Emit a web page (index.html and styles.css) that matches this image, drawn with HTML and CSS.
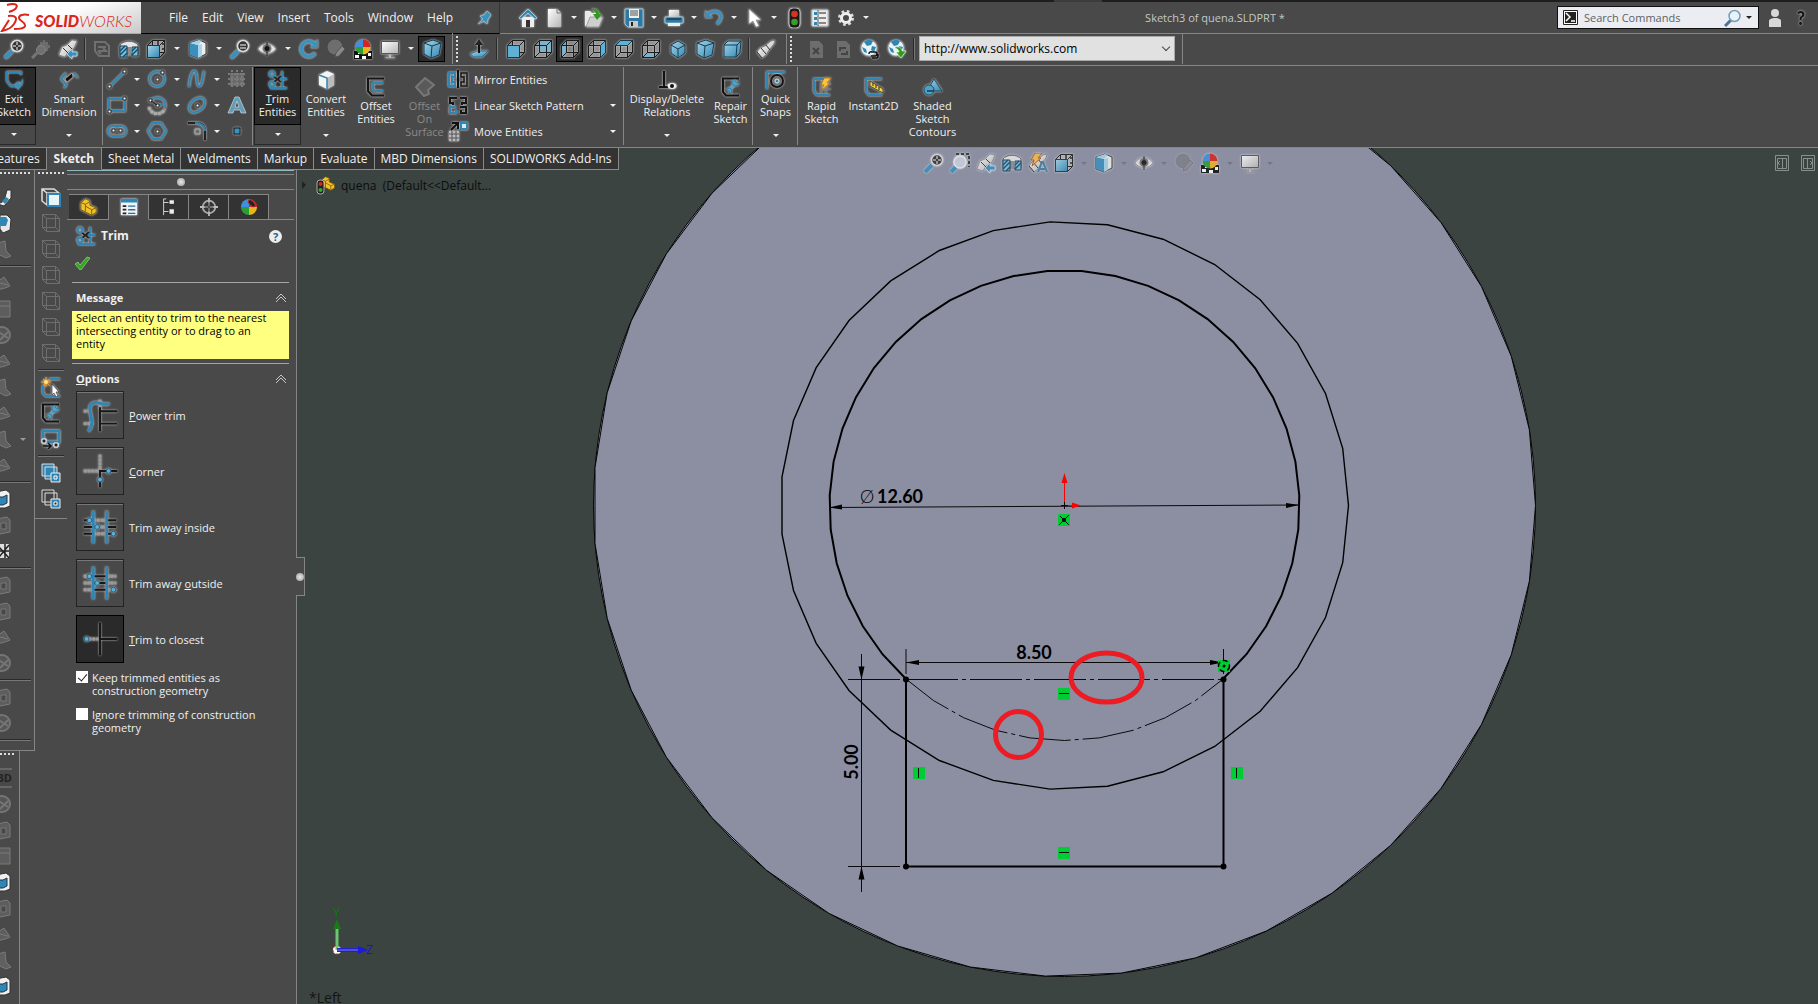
FILE: index.html
```html
<!DOCTYPE html>
<html lang="en">
<head>
<meta charset="utf-8">
<title>Sketch3 of quena.SLDPRT *</title>
<link rel="stylesheet" href="styles.css">
</head>
<body>
<svg class="defs" aria-hidden="true">
  <defs>
    <linearGradient id="gb" x1="0" y1="0" x2="1" y2="1"><stop offset="0" stop-color="#a5d5ea"/><stop offset="1" stop-color="#3388b3"/></linearGradient>
    <linearGradient id="gw" x1="0" y1="0" x2="1" y2="1"><stop offset="0" stop-color="#fff"/><stop offset="1" stop-color="#b5b5b5"/></linearGradient>
    <symbol id="wire" viewBox="0 0 20 20"><path class="k" d="M1.500 6.500h12v12h-12zM6.500 1.500h12v12h-12zM1.500 6.500l5-5M13.500 6.500l5-5M13.500 18.500l5-5M1.500 18.500l5-5"/></symbol>
    <symbol id="fit" viewBox="0 0 20 20"><path d="M1 19l7-7" stroke="#3b8fbc" stroke-width="4"/><circle cx="13" cy="7" r="5.500" fill="#333" stroke="#ddd" stroke-width="1.500"/><path d="M13 3v8M9 7h8" stroke="#fff" stroke-dasharray="3 2"/></symbol>
    <symbol id="area" viewBox="0 0 20 20"><path d="M6 1h13v13" fill="none" stroke="#333" stroke-width="2" stroke-dasharray="3 2"/><path d="M1 19l5-5" stroke="#3b8fbc" stroke-width="4"/><circle cx="10" cy="9" r="6" fill="#c9d3dd" stroke="#eee" stroke-width="1.500"/></symbol>
    <symbol id="areaoff" viewBox="0 0 20 20"><path d="M7 1h12v12H7z" fill="#6c6c6c"/><path d="M8 6V2h4M14 2h4v4M18 9v4h-4" fill="none" stroke="#444" stroke-width="1.500"/><path d="M1 19l5-5" stroke="#777" stroke-width="3"/><circle cx="10" cy="11" r="4.500" fill="#707070" stroke="#858585"/></symbol>
    <symbol id="prev" viewBox="0 0 20 20"><path d="M1 16l3-8 5-2 5-5 5 1-3 7-6 4-3 5z" fill="url(#gw)" stroke="#666" stroke-width=".6"/><path d="M5 9l5 5M10 6l4 4" stroke="#333"/><path d="M9 15l5-5v3h5v4h-5v3z" fill="#3b8fbc" stroke="#d9eef8" stroke-width=".6"/></symbol>
    <symbol id="spy" viewBox="0 0 20 20"><path d="M1 13l3-4 5-2 6-5 4-1-1 4-5 6-3 5-4 3z" fill="url(#gw)" stroke="#555" stroke-width=".6"/><path d="M1 13l5 6M5 9l5 6M10 6l4 5" stroke="#333"/></symbol>
    <symbol id="loop" viewBox="0 0 20 20"><path d="M3 12V3h10l4 4v10H7zM6 8h8M6 12h8l-3-3M9 15l-3-3" fill="none" stroke="#707070" stroke-width="2"/></symbol>
    <symbol id="section" viewBox="0 0 20 20"><path d="M1 6c4-5 14-5 18 0v9H1z" fill="#e6e6e6" stroke="#333" stroke-width=".7"/><path d="M8 8h4v8H8z" fill="#8d8d8d"/><path d="M1 7h7v11H1zM13 8h6v9h-6z" fill="#7fc0de" stroke="#17394c"/><path d="M1 12l5-5M1 16l7-7M4 18l4-4M13 12l4-4M13 16l6-6" stroke="#12506f" stroke-width="1.500"/></symbol>
    <symbol id="orient" viewBox="0 0 20 20"><use href="#wire"/><path d="M1.500 6.500h12v12h-12z" fill="url(#gb)" stroke="#17394c"/><path d="M12 1v5M16 5h3M16 10h3" stroke="#222" stroke-width="1.500"/></symbol>
    <symbol id="style" viewBox="0 0 20 20"><path d="M2 4l9-3 7 3v11l-8 4-8-3z" fill="#eee" stroke="#333"/><path d="M2 4l8 2v13l-8-3z" fill="#3b8fbc"/><path d="M2 4l9-3 3 1-4 4z" fill="#a5d5ea"/><path d="M10 6l4-1v12l-4 2z" fill="#a5d5ea"/></symbol>
    <symbol id="lens" viewBox="0 0 20 20"><path d="M1 19l7-7" stroke="#3b8fbc" stroke-width="4"/><circle cx="13" cy="7" r="5.500" fill="#333" stroke="#ddd" stroke-width="1.500"/><path d="M10 6h6M10 9h6" stroke="#fff"/></symbol>
    <symbol id="eye" viewBox="0 0 20 20"><path d="M1 10c4-7 14-7 18 0-4 6-14 6-18 0z" fill="#e2e2e2" stroke="#777" stroke-width=".6"/><circle cx="10" cy="9.500" r="4.500" fill="#777"/><circle cx="10" cy="9.500" r="2.500" fill="#111"/><path d="M10 3v14" stroke="#222"/></symbol>
    <symbol id="redo" viewBox="0 0 20 20"><path d="M16 14a7.500 7.500 0 1 1 0-8" fill="none" stroke="#3b93bd" stroke-width="3.500"/><path d="M19 0v9h-8z" fill="#3b93bd"/></symbol>
    <symbol id="paint" viewBox="0 0 20 20"><circle cx="9" cy="8" r="7.500" fill="#6e6e6e"/><path d="M9 18l1-4 6-7 3 3-6 7z" fill="#8a8a8a" stroke="#555"/></symbol>
    <symbol id="scene" viewBox="0 0 20 20"><path d="M1 12h18v8H1z" fill="#111"/><path d="M2 16h4v3H2zM9 17h4v3H9zM15 14h3v3h-3zM5 13h3v2H5z" fill="#fff"/><path d="M10 8V.500A7.500 7.500 0 0 0 2.500 8z" fill="#3f8fe0"/><path d="M10 8V.500A7.500 7.500 0 0 1 17.500 8z" fill="#d8231f"/><path d="M10 8h7.500a7.500 7.500 0 0 1-7.500 7.500z" fill="#eab51c"/><path d="M10 8v7.500A7.500 7.500 0 0 1 2.500 8z" fill="#2c9e33"/></symbol>
    <symbol id="screen" viewBox="0 0 20 20"><path d="M1.500 2.500h17v12h-17z" fill="url(#gw)" stroke="#555"/><path d="M9 15h2v3h4v1H5v-1h4z" fill="#ddd" stroke="#555" stroke-width=".5"/></symbol>
    <symbol id="iso" viewBox="0 0 20 20"><path d="M10 2l7 4v8l-7 5-7-5V6z" fill="url(#gb)" stroke="#17394c"/><path d="M3 6l7 4 7-4M10 10v9" fill="none" stroke="#17394c"/></symbol>
    <symbol id="box3" viewBox="0 0 20 20"><path d="M2 6l4-4h13l-1 12-4 4H2z" fill="url(#gb)" stroke="#17394c"/><path d="M2 6h13l-1 12M15 6l4-4" fill="none" stroke="#17394c"/></symbol>
    <symbol id="box4" viewBox="0 0 20 20"><path d="M2 4l9-3 8 3-2 12-8 3-7-4z" fill="url(#gb)" stroke="#17394c"/><path d="M2 4l8 3 9-3M10 7L9 19" fill="none" stroke="#17394c"/></symbol>
    <symbol id="normal" viewBox="0 0 20 20"><path d="M1 15l7-3h11l-6 6H5z" fill="url(#gb)" stroke="#2a6f92"/><path d="M10 14V4" stroke="#111" stroke-width="2"/><path d="M10 0l4 6H6z" fill="#222"/></symbol>
    <symbol id="ffront" viewBox="0 0 20 20"><use href="#wire"/><path class="f" d="M1.500 6.500h12v12h-12z"/></symbol>
    <symbol id="fback" viewBox="0 0 20 20"><path class="f" d="M6.500 1.500h12v12h-12z"/><use href="#wire"/></symbol>
    <symbol id="fleft" viewBox="0 0 20 20"><path class="f" d="M1.500 6.500l5-5v12l-5 5z"/><use href="#wire"/></symbol>
    <symbol id="fright" viewBox="0 0 20 20"><use href="#wire"/><path class="f" d="M13.500 6.500l5-5v12l-5 5z"/></symbol>
    <symbol id="ftop" viewBox="0 0 20 20"><use href="#wire"/><path class="f" d="M1.500 6.500l5-5h12l-5 5z"/></symbol>
    <symbol id="fbottom" viewBox="0 0 20 20"><path class="f" d="M1.500 18.500l5-5h12l-5 5z"/><use href="#wire"/></symbol>
    <symbol id="docx" viewBox="0 0 20 20"><path d="M4 2h9l4 4v13H4z" fill="#6d6d6d"/><path d="M7 9l6 6M13 9l-6 6" stroke="#444" stroke-width="2"/></symbol>
    <symbol id="docr" viewBox="0 0 20 20"><path d="M4 2h9l4 4v13H4z" fill="#6d6d6d"/><path d="M7 12V9h6M14 12v3H8" fill="none" stroke="#444" stroke-width="2"/></symbol>
    <symbol id="globe" viewBox="0 0 20 20"><circle cx="9" cy="9" r="8" fill="#e9f3f8" stroke="#888" stroke-width=".6"/><path d="M4 3c3-3 7-2 9-1l-2 4-4 1zM2 8l4 2 1 4-3-1zM12 7l4 1-2 5-3-2z" fill="#2f86b5"/></symbol>
    <symbol id="link" viewBox="0 0 20 20"><use href="#globe"/><path d="M9 15a2 2 0 0 1 3-2h3a2 2 0 0 1 0 4h-4M18 15v2a2 2 0 0 1-2 2h-4" fill="none" stroke="#111" stroke-width="1.500"/></symbol>
    <symbol id="down" viewBox="0 0 20 20"><use href="#globe"/><path d="M8 8c5-1 7 2 7 4h4l-5 7-5-6h3c0-2-1-3-4-4z" fill="#2f9a1b" stroke="#e8ffe0" stroke-width=".6"/></symbol>
    <symbol id="home" viewBox="0 0 20 20"><path d="M4 9h12v10H4z" fill="#eee"/><path d="M10 1l9 9-2 1-7-6-7 6-2-1z" fill="#2f86b5" stroke="#bfe0ef" stroke-width=".7"/><path d="M8 12h4v7H8z" fill="#333"/></symbol>
    <symbol id="new" viewBox="0 0 20 20"><path d="M4 1h9l4 4v14H4z" fill="url(#gw)"/><path d="M13 1v4h4" fill="none" stroke="#777"/></symbol>
    <symbol id="open" viewBox="0 0 20 20"><path d="M1 3h5l2 2h7v13H1z" fill="#e8e8e8"/><path d="M6 9h13l-4 10H2z" fill="#cfcfcf" stroke="#777" stroke-width=".6"/><path d="M7 1c5-1 8 1 8 5h3l-5 6-4-6h3c0-2-2-3-5-5z" fill="#2f9a1b"/></symbol>
    <symbol id="save" viewBox="0 0 20 20"><path d="M1 1h18v18H4l-3-3z" fill="#2f78a0" stroke="#a7cfe2" stroke-width=".8"/><path d="M5 1h10v9H5z" fill="#eee"/><path d="M6 3h8M6 5h8M6 7h8" stroke="#555"/><path d="M5 13h9v6H5z" fill="#c9c9c9"/><path d="M7 14h2v4H7z" fill="#222"/></symbol>
    <symbol id="print" viewBox="0 0 20 20"><path d="M5 2h10v7H5z" fill="url(#gw)"/><path d="M1 9h18v6H1z" fill="#2f78a0" stroke="#a7cfe2" stroke-width=".8"/><path d="M3 11h14" stroke="#123"/><path d="M4 15h12v3H4z" fill="#eee"/></symbol>
    <symbol id="undo" viewBox="0 0 20 20"><path d="M4 6c5-4 13-3 13 3 0 3-2 5-4 7" fill="none" stroke="#3b8fbc" stroke-width="3"/><path d="M1 2v8h8z" fill="#3b8fbc"/></symbol>
    <symbol id="cursor" viewBox="0 0 20 20"><path d="M5 1v15l4-3 3 6 3-1-3-6h5z" fill="#fff" stroke="#777" stroke-width=".6"/></symbol>
    <symbol id="light" viewBox="0 0 20 20"><rect x="5" y="0" width="11" height="20" rx="4" fill="#1b1b1b" stroke="#bbb"/><circle cx="10.500" cy="6" r="3.300" fill="#d8331f"/><circle cx="10.500" cy="14" r="3.300" fill="#3d9a2c"/></symbol>
    <symbol id="list" viewBox="0 0 20 20"><path d="M2 2h16v16H2z" fill="#eee" stroke="#bbb"/><path d="M4 4h3v3H4zM4 9h3v3H4zM4 14h3v3H4z" fill="#2f86b5"/><path d="M9 5h7M9 10h7M9 15h7" stroke="#222"/><path d="M8 2v16" stroke="#555"/></symbol>
    <symbol id="gear" viewBox="0 0 20 20"><circle cx="10" cy="10" r="6.500" fill="none" stroke="#ddd" stroke-width="3" stroke-dasharray="2.600 2.500"/><circle cx="10" cy="10" r="4.500" fill="none" stroke="#eee" stroke-width="3"/></symbol>
    <symbol id="pin" viewBox="0 0 20 20"><path d="M3 17l5-5-3-3 4-1 3-4 4 4-3 4-1 5-3-3z" fill="#3b93bd" stroke="#9cc8de" stroke-width=".6"/></symbol>
    <symbol id="exit" viewBox="0 0 20 20"><path class="b" d="M17 5V2H3v9l4 5h4"/><path d="M10 15l5-4v3c2-1 3-3 4-6 0 7-2 9-4 9v3z" fill="#3b8fbc"/></symbol>
    <symbol id="dim" viewBox="0 0 20 20"><path class="b" d="M2 9l5-6M15 3l4 5M2 9l5 5M5 18l3-4"/><path d="M6 9l7-6 1 4-6 5z" fill="#111" stroke="#bbb" stroke-width=".6"/></symbol>
    <symbol id="line" viewBox="0 0 20 20"><path class="b" d="M3 17L17 3"/><path class="p" d="M1 16h3v3H1zM16 1h3v3h-3z"/></symbol>
    <symbol id="circ" viewBox="0 0 20 20"><circle class="b" cx="10" cy="10" r="7.500"/><path class="p" d="M9 9h3v3H9zM14 2h3v3h-3z"/></symbol>
    <symbol id="spline" viewBox="0 0 20 20"><path class="b" d="M2 18C3 8 5 2 7 2c5 0 1 15 5 15 3 0 4-8 5-15"/></symbol>
    <symbol id="rect" viewBox="0 0 20 20"><path class="b" d="M2 4h16v12H2z"/><path class="p" d="M1 15h3v3H1zM16 2h3v3h-3z"/></symbol>
    <symbol id="arc" viewBox="0 0 20 20"><path class="b" d="M4 5c8-6 16 0 14 8M10 10l5 0"/><path d="M2 12c2 8 12 9 16 2" fill="none" stroke="#aaa" stroke-width="3" stroke-dasharray="3 1"/><path class="p" d="M2 4h3v3H2zM9 9h3v3H9z"/><path d="M4 6l6 4" stroke="#111"/></symbol>
    <symbol id="ell" viewBox="0 0 20 20"><ellipse class="b" cx="10" cy="10" rx="9" ry="6" transform="rotate(-40 10 10)"/><path class="p" d="M9 9h3v3H9z"/></symbol>
    <symbol id="slot" viewBox="0 0 20 20"><rect class="b" x="1" y="5" width="18" height="10" rx="5"/><path class="p" d="M5 8h3v3H5zM12 8h3v3h-3z"/></symbol>
    <symbol id="hex" viewBox="0 0 20 20"><path class="b" d="M6 2h8l5 8-5 8H6l-5-8z"/><path class="p" d="M9 9h3v3H9z"/></symbol>
    <symbol id="fil" viewBox="0 0 20 20"><path d="M1 2h9c5 0 8 3 8 8v9" fill="none" stroke="#222" stroke-width="2"/><path class="b" d="M8 2c6 0 10 3 10 8"/><path d="M8 8h5v5H8z" fill="none" stroke="#aaa"/></symbol>
    <symbol id="grid" viewBox="0 0 20 20"><path d="M3 4h14v13H3z" fill="#686868"/><path d="M1 5h18M1 10h18M1 15h18M5 1v18M10 1v18M15 1v18" stroke="#7b7b7b" stroke-width="2" stroke-dasharray="2 1"/></symbol>
    <symbol id="txt" viewBox="0 0 20 20"><path d="M1 18h5l1-3h6l1 3h5L12 2H8zM8 12l2-6 2 6z" fill="#5f9dbb" stroke="#ccc" stroke-width=".8" fill-rule="evenodd"/></symbol>
    <symbol id="pt" viewBox="0 0 20 20"><path d="M7 7h6v6H7z" fill="#3b93bd" stroke="#111"/></symbol>
    <symbol id="trim" viewBox="0 0 20 20"><path d="M14 1v17M9 9h10M2 18h17" stroke="#2f86b5" stroke-width="2" fill="none"/><path d="M5 6l8 6M5 13l8-7" stroke="#222" stroke-width="2"/><circle class="b" cx="4" cy="4" r="2.500"/><circle class="b" cx="4" cy="14" r="2.500"/></symbol>
    <symbol id="conv" viewBox="0 0 20 20"><path d="M3 5l8-4 7 3v11l-7 4-8-4z" fill="#f4f4f4"/><path d="M11 8l7-4v11l-7 4z" fill="#bbb"/><path d="M3 5l8 3v11" fill="none" stroke="#2f86b5" stroke-width="1.500"/></symbol>
    <symbol id="off" viewBox="0 0 20 20"><path d="M18 1.500H2V14l4 4.500h12" fill="none" stroke="#151515" stroke-width="2"/><path class="b" d="M17 6H7v6l2 2h8"/></symbol>
    <symbol id="offs" viewBox="0 0 20 20"><path d="M1 10l9-9 9 7-6 5 1 4-5 2z" fill="#5a5a5a" stroke="#777" stroke-width="2"/></symbol>
    <symbol id="mir" viewBox="0 0 20 20"><path d="M10 1v18" stroke="#111" stroke-width="2"/><path class="b" d="M1 4v13h6v-4H4V8h3V4z"/><path d="M19 4v13h-6v-4h3V8h-3V4z" fill="none" stroke="#161616" stroke-width="1.500"/></symbol>
    <symbol id="pat" viewBox="0 0 20 20"><path d="M9 3H2v5h3v2M12 3h6v5h-4v2" fill="none" stroke="#161616" stroke-width="2"/><path class="b" d="M8 12H2v6h6v-3"/><path d="M12 12h6v6h-5v-3" fill="none" stroke="#161616" stroke-width="2"/></symbol>
    <symbol id="mov" viewBox="0 0 20 20"><path d="M1 10h10v10H1z" fill="#bbb"/><path d="M1 13h10M1 17h10M4 10v10M8 10v10" stroke="#555"/><path d="M3 9l6-6M4 2h6v6" fill="none" stroke="#111" stroke-width="2"/><path d="M12 1h8v8h-8z" fill="#2f86b5"/><path d="M14 3h4v4h-4z" fill="#d5ecf6"/></symbol>
    <symbol id="rel" viewBox="0 0 20 20"><path d="M7 1v15M2 17h10" stroke="#111" stroke-width="2"/><ellipse cx="15" cy="16" rx="4.500" ry="3" fill="#eee"/><circle cx="15" cy="16" r="2" fill="#111"/></symbol>
    <symbol id="rep" viewBox="0 0 20 20"><path d="M18 1.500H2V15l3 3.500h13" fill="none" stroke="#111" stroke-width="2"/><path d="M8 13l6-6" stroke="#4aa5d0" stroke-width="2.500"/><path d="M18 5a3.500 3.500 0 1 1-3-3l-1 2 2 2zM5 13a3 3 0 1 1 3 4l1-2-2-2z" fill="#4aa5d0" stroke="#12506f" stroke-width=".5"/></symbol>
    <symbol id="snap" viewBox="0 0 20 20"><path class="b" d="M19 2H1v17"/><circle cx="11" cy="11" r="6" fill="none" stroke="#151515" stroke-width="2"/><circle cx="11" cy="11" r="2" fill="#2f86b5" stroke="#ddd"/></symbol>
    <symbol id="rapid" viewBox="0 0 20 20"><path class="b" d="M14 2H2v12l3 4h13"/><path d="M8 7h11M8 12h11M9 5v12M14 5v12" stroke="#777"/><path d="M12 1h7l-4 5h3l-9 8 3-6H9z" fill="#f5c63a" stroke="#a35b16" stroke-width=".7"/></symbol>
    <symbol id="inst" viewBox="0 0 20 20"><path class="b" d="M18 2H2v12l3 4h13"/><path d="M6 4l13 8v4L6 9z" fill="#f2d24a" stroke="#222" stroke-width=".7"/><path d="M9 6v3M12 8v3M15 10v3" stroke="#222"/></symbol>
    <symbol id="shade" viewBox="0 0 20 20"><path d="M11 2l8 12H4z" fill="url(#gb)" stroke="#1d4a61"/><circle cx="6" cy="13" r="5" fill="#4ea2c9" stroke="#1d4a61"/><path d="M4 14h7" stroke="#17394c" stroke-width="1.500"/></symbol>
    <symbol id="ann" viewBox="0 0 20 20"><use href="#spy"/><path d="M7 0h7l-4 5h3l-9 8 2-6H3z" fill="#f3bd4c" stroke="#a3410d" stroke-width=".8"/><path d="M10 19l4-10h1l4 10M11 16h6" fill="none" stroke="#3b7fa6" stroke-width="2"/></symbol>
    <symbol id="part" viewBox="0 0 20 20"><path d="M1 5l5-4 5 2v5l7 3v5l-5 3L1 13z" fill="#f2c329" stroke="#7a5a08"/><path d="M1 5l5 2v8M6 7l5-3M13 19v-6l5-2M13 13L6 9" fill="none" stroke="#7a5a08"/></symbol>
    <symbol id="pmlist" viewBox="0 0 20 20"><path d="M1 1h18v18H1z" fill="#eef3f6"/><path d="M1 1h18v4H1z" fill="#2f86b5"/><path d="M3 8h4v2H3zM3 12h4v2H3zM3 16h4v2H3z" fill="#222"/><path d="M9 9h8M9 13h8M9 17h8" stroke="#2f6f94" stroke-width="1.500"/></symbol>
    <symbol id="tree" viewBox="0 0 20 20"><path d="M4 1v18M4 5h6M4 15h6M4 1h3" stroke="#ddd" fill="none"/><path d="M10 2h6v5h-6zM10 12h6v6h-6z" fill="#eee" stroke="#222"/></symbol>
    <symbol id="target" viewBox="0 0 20 20"><circle cx="10" cy="10" r="7" fill="none" stroke="#aaa" stroke-width="2"/><path d="M10 0v20M0 10h20" stroke="#bbb" stroke-width="2"/><path d="M10 5v10M5 10h10" stroke="#222"/></symbol>
    <symbol id="ball" viewBox="0 0 20 20"><path d="M10 10V1A9 9 0 0 0 1 10z" fill="#3f8fe0"/><path d="M10 10V1a9 9 0 0 1 9 9z" fill="#d8231f"/><path d="M10 10h9a9 9 0 0 1-9 9z" fill="#eab51c"/><path d="M10 10v9a9 9 0 0 1-9-9z" fill="#2c9e33"/><ellipse cx="13" cy="6" rx="2.500" ry="5" transform="rotate(-45 13 6)" fill="#222" stroke="#b33"/></symbol>
    <symbol id="sk" viewBox="0 0 20 20"><path d="M1 2h12l5 4v12H6l-5-4zM1 2l5 4h12M6 6v12" fill="none" stroke="#ddd" stroke-width="1.500"/><path d="M7 7h12v12H7z" fill="#eaf4f8" stroke="#2f86b5" stroke-width="2"/></symbol>
    <symbol id="sel" viewBox="0 0 20 20"><path class="b" d="M8 2h11M2 8v8l3 3h14"/><path d="M5 0v10M0 5h10M2 2l7 7M9 2L2 9" stroke="#f19a2b"/><circle cx="5" cy="5" r="2" fill="#ffe27a"/><path d="M11 7v11l2-2 2 4 2-1-2-4h3z" fill="#fff" stroke="#333" stroke-width=".7"/></symbol>
    <symbol id="scr" viewBox="0 0 20 20"><path d="M2 2h16v11H2z" fill="none" stroke="#2f86b5" stroke-width="2.500"/><path d="M1 10h4v4H1zM13 14h4v4h-4z" fill="#222" stroke="#fff"/><path d="M2 17h7M7 14l3 3-3 3" fill="none" stroke="#111" stroke-width="1.500"/></symbol>
    <symbol id="lay1" viewBox="0 0 20 20"><path d="M1 1h12v12H1zM4 4h12v12H4z" fill="#2f86b5" stroke="#ddd"/><path d="M10 10h9v9h-9z" fill="#2f86b5" stroke="#eee"/><path d="M13 13h3v3h-3z" fill="#2f86b5" stroke="#fff"/></symbol>
    <symbol id="lay2" viewBox="0 0 20 20"><path d="M1 1h12v12H1zM4 4h12v12H4z" fill="#444" stroke="#ddd"/><path d="M10 10h9v9h-9z" fill="#2f86b5" stroke="#eee"/><path d="M13 13h3v3h-3z" fill="#222" stroke="#fff"/></symbol>
    <symbol id="cubeoff" viewBox="0 0 20 20"><path d="M1.500 1.500h13l4 4v13h-13l-4-4zM1.500 1.500l4 4h13M5.500 5.500v13M1.500 14.500h13v-13M14.500 14.500l4 4" fill="none" stroke="#6e6e6e"/></symbol>
    <symbol id="sm1" viewBox="0 0 20 20"><path d="M6 17l6-3 3-11h4v8l-7 8z" fill="#eee" stroke="#333"/><path d="M10 14l4-4 3 2-4 5z" fill="#2f86b5"/></symbol>
    <symbol id="sm2" viewBox="0 0 20 20"><path d="M8 2h7l4 4-1 11-7 3-3-4z" fill="#e8e8e8" stroke="#333"/><path d="M8 4h6l2 3-2 6H8z" fill="#2f86b5"/></symbol>
    <symbol id="sm3" viewBox="0 0 20 20"><path d="M6 4l7-2 1 10 5 5-5 2-8-4z" fill="#606060" stroke="#7b7b7b"/></symbol>
    <symbol id="sm4" viewBox="0 0 20 20"><path d="M6 2h12v16H6M6 7h12" fill="#5d5d5d" stroke="#7b7b7b"/></symbol>
    <symbol id="sm5" viewBox="0 0 20 20"><circle cx="10" cy="10" r="8" fill="#565656" stroke="#757575" stroke-width="2"/><path d="M5 6l11 7M8 15l8-8" stroke="#757575" stroke-width="2"/></symbol>
    <symbol id="sm6" viewBox="0 0 20 20"><path d="M5 9l7-5 6 9-5 2-8 2M8 10l8 2" fill="#5d5d5d" stroke="#7b7b7b"/></symbol>
    <symbol id="sm7" viewBox="0 0 20 20"><path d="M4 3l10-2 4 3v13l-5 2H5z" fill="#f0f0f0" stroke="#333"/><path d="M6 8h5l4-2v8l-4 2H6z" fill="#2f86b5" stroke="#234"/></symbol>
    <symbol id="sm8" viewBox="0 0 20 20"><path d="M5 4l10-2 3 3v12l-10 2-3-2z" fill="#5d5d5d" stroke="#7b7b7b"/><path d="M9 8h5v6H9z" fill="#484848" stroke="#777"/></symbol>
    <symbol id="sm9" viewBox="0 0 20 20"><path d="M6 3h11v14H6z" fill="#ddd"/><path d="M6 5l11 12M17 4L7 16M13 3v14M6 10h11" stroke="#222" stroke-width="1.500"/></symbol>
    <symbol id="trimbig" viewBox="0 0 48 48"><path class="g" d="M24 8v10M7 20h8M7 33h10"/><path class="w" d="M24 20h18M24 33h18M24 16v25"/><path class="b3" d="M12 41c10-12-6-26 6-30 6-1 8 4 16 1"/></symbol>
    <symbol id="corner" viewBox="0 0 48 48"><path class="g" d="M24 7v17M7 24h16"/><path class="w" d="M24 41V24h18"/><circle class="q" cx="33" cy="24" r="2.500"/><circle class="q" cx="24" cy="33" r="2.500"/></symbol>
    <symbol id="inside" viewBox="0 0 48 48"><path class="w" d="M7 17h10M31 17h10M7 24h10M31 24h10M7 31h10M31 31h10"/><path class="g" d="M17 17h14M17 24h14M17 31h14"/><path class="b3" d="M17 7v34M31 7v34"/><circle class="q" cx="13" cy="17" r="2.500"/><circle class="q" cx="21" cy="24" r="2.500"/><circle class="q" cx="38" cy="31" r="2.500"/></symbol>
    <symbol id="outside" viewBox="0 0 48 48"><path class="g" d="M7 17h10M31 17h10M7 24h10M31 24h10M7 31h10M31 31h10"/><path class="w" d="M17 17h14M17 24h14M17 31h14"/><path class="b3" d="M17 7v34M31 7v34"/><circle class="q" cx="13" cy="17" r="2.500"/><circle class="q" cx="21" cy="24" r="2.500"/><circle class="q" cx="38" cy="31" r="2.500"/></symbol>
    <symbol id="closest" viewBox="0 0 48 48"><path class="w" d="M24 7v34M24 24h18"/><path class="g" d="M12 24h10"/><circle class="q" cx="10" cy="24" r="2.500"/></symbol>
  </defs>
</svg>

<div class="strip"><i></i></div>

<header class="menubar">
  <div class="brand">
    <svg class="mark" viewBox="0 0 30 30" aria-hidden="true"><path d="M7 3c6-2 12-1 9 3-1 2-4 3-7 4M8 14c8-1 10 2 6 8-2 3-7 6-12 7l7-11M29 13c-6-1-10 0-10 3 0 3 7 4 6 8-1 3-6 3-11 3" fill="none" stroke="#d9261c" stroke-width="2"/></svg>
    <span class="name"><b>SOLID</b>WORKS</span>
  </div>
  <nav class="menus">
    <button>File</button><button>Edit</button><button>View</button><button>Insert</button><button>Tools</button><button>Window</button><button>Help</button>
    <button class="pinbtn" aria-label="Pin menu"><svg class="ic"><use href="#pin"/></svg></button>
  </nav>
  <div class="quick">
    <button class="t" aria-label="Home"><svg class="ic"><use href="#home"/></svg></button>
    <button class="t" aria-label="New"><svg class="ic"><use href="#new"/></svg></button><button class="dd" aria-label="New options"></button>
    <button class="t" aria-label="Open"><svg class="ic"><use href="#open"/></svg></button><button class="dd" aria-label="Open options"></button>
    <button class="t" aria-label="Save"><svg class="ic"><use href="#save"/></svg></button><button class="dd" aria-label="Save options"></button>
    <button class="t" aria-label="Print"><svg class="ic"><use href="#print"/></svg></button><button class="dd" aria-label="Print options"></button>
    <button class="t" aria-label="Undo"><svg class="ic"><use href="#undo"/></svg></button><button class="dd" aria-label="Undo options"></button>
    <button class="t" aria-label="Select"><svg class="ic"><use href="#cursor"/></svg></button><button class="dd" aria-label="Select options"></button>
    <button class="t" aria-label="Rebuild"><svg class="ic"><use href="#light"/></svg></button>
    <button class="t" aria-label="File properties"><svg class="ic"><use href="#list"/></svg></button>
    <button class="t" aria-label="Options"><svg class="ic flat"><use href="#gear"/></svg></button><button class="dd" aria-label="More options"></button>
  </div>
  <div class="doc">Sketch3 of quena.SLDPRT *</div>
  <div class="search">
    <svg class="prompt" viewBox="0 0 15 15" aria-hidden="true"><path d="M.500.500h14v14H.500z" fill="#fff" stroke="#222"/><path d="M2 2h11v11H2z" fill="#222"/><path d="M3 3l4 4-4 4M8 11h4" fill="none" stroke="#fff" stroke-width="1.500"/></svg>
    <input type="text" aria-label="Search Commands" placeholder="Search Commands">
    <svg class="glass" viewBox="0 0 18 18" aria-hidden="true"><path d="M1 17l6-6" stroke="#4b7396" stroke-width="3"/><circle cx="10.500" cy="7" r="5.500" fill="#e6f3fa" stroke="#7a9cb5" stroke-width="1.500"/></svg>
    <button class="dd dark" aria-label="Search scope"></button>
  </div>
  <button class="t user" aria-label="Account"><svg class="ic flat" viewBox="0 0 20 20"><circle cx="10" cy="5" r="4" fill="#d8d8d8"/><path d="M4 19v-6c0-4 12-4 12 0v6z" fill="#d8d8d8"/></svg></button>
  <button class="t q1" aria-label="Help">?</button>
</header>

<div class="bar">
  <button class="t" aria-label="Zoom to fit"><svg class="ic"><use href="#fit"/></svg></button>
  <button class="t" aria-label="Zoom to area"><svg class="ic flat"><use href="#areaoff"/></svg></button>
  <button class="t" aria-label="Previous view"><svg class="ic"><use href="#prev"/></svg></button>
  <i class="sep"></i>
  <button class="t" aria-label="Dynamic"><svg class="ic flat"><use href="#loop"/></svg></button>
  <button class="t" aria-label="Section view"><svg class="ic"><use href="#section"/></svg></button>
  <button class="t" aria-label="View orientation"><svg class="ic"><use href="#orient"/></svg></button><button class="dd" aria-label="Orientation options"></button>
  <button class="t" aria-label="Display style"><svg class="ic"><use href="#style"/></svg></button><button class="dd" aria-label="Style options"></button>
  <button class="t" aria-label="Magnify"><svg class="ic"><use href="#lens"/></svg></button>
  <button class="t" aria-label="Hide items"><svg class="ic"><use href="#eye"/></svg></button><button class="dd" aria-label="Hide options"></button>
  <button class="t" aria-label="Rotate view"><svg class="ic"><use href="#redo"/></svg></button>
  <button class="t" aria-label="Edit appearance"><svg class="ic flat"><use href="#paint"/></svg></button>
  <button class="t" aria-label="Apply scene"><svg class="ic"><use href="#scene"/></svg></button>
  <button class="t" aria-label="View settings"><svg class="ic"><use href="#screen"/></svg></button><button class="dd" aria-label="View options"></button>
  <button class="t on" aria-label="Perspective"><svg class="ic"><use href="#box4"/></svg></button>
  <i class="edge"></i><i class="grip"></i>
  <button class="t" aria-label="Normal to"><svg class="ic"><use href="#normal"/></svg></button>
  <i class="sep wide-sep"></i>
  <button class="t" aria-label="Front"><svg class="ic"><use href="#ffront"/></svg></button>
  <button class="t" aria-label="Back"><svg class="ic"><use href="#fback"/></svg></button>
  <button class="t on" aria-label="Left"><svg class="ic"><use href="#fleft"/></svg></button>
  <button class="t" aria-label="Right"><svg class="ic"><use href="#fright"/></svg></button>
  <button class="t" aria-label="Top"><svg class="ic"><use href="#ftop"/></svg></button>
  <button class="t" aria-label="Bottom"><svg class="ic"><use href="#fbottom"/></svg></button>
  <button class="t" aria-label="Isometric"><svg class="ic"><use href="#iso"/></svg></button>
  <button class="t" aria-label="Trimetric"><svg class="ic"><use href="#box4"/></svg></button>
  <button class="t" aria-label="Dimetric"><svg class="ic"><use href="#box3"/></svg></button>
  <i class="sep"></i>
  <button class="t" aria-label="View selector"><svg class="ic"><use href="#spy"/></svg></button>
  <i class="edge"></i><i class="grip wide-grip"></i>
  <button class="t" aria-label="Stop"><svg class="ic flat"><use href="#docx"/></svg></button>
  <button class="t" aria-label="Refresh"><svg class="ic flat"><use href="#docr"/></svg></button>
  <button class="t" aria-label="Web link"><svg class="ic"><use href="#link"/></svg></button>
  <button class="t" aria-label="Download"><svg class="ic"><use href="#down"/></svg></button>
  <i class="sep"></i>
  <div class="url"><select aria-label="Address"><option>http://www.solidworks.com</option></select></div>
  <i class="edge"></i>
</div>

<div class="ribbon">
  <div class="cmd exit on"><button><svg class="ic"><use href="#exit"/></svg><span>Exit<br>Sketch</span></button><button class="dd" aria-label="Exit options"></button></div>
  <div class="cmd smart"><button><svg class="ic"><use href="#dim"/></svg><span>Smart<br>Dimension</span></button><button class="dd" aria-label="Dimension options"></button></div>
  <i class="rule"></i>
  <div class="grid">
    <button class="t" aria-label="Line"><svg class="ic"><use href="#line"/></svg></button><button class="dd" aria-label="Line options"></button>
    <button class="t" aria-label="Circle"><svg class="ic"><use href="#circ"/></svg></button><button class="dd" aria-label="Circle options"></button>
    <button class="t" aria-label="Spline"><svg class="ic"><use href="#spline"/></svg></button><button class="dd" aria-label="Spline options"></button>
    <button class="t" aria-label="Plane"><svg class="ic flat"><use href="#grid"/></svg></button>
    <button class="t" aria-label="Rectangle"><svg class="ic"><use href="#rect"/></svg></button><button class="dd" aria-label="Rectangle options"></button>
    <button class="t" aria-label="Arc"><svg class="ic"><use href="#arc"/></svg></button><button class="dd" aria-label="Arc options"></button>
    <button class="t" aria-label="Ellipse"><svg class="ic"><use href="#ell"/></svg></button><button class="dd" aria-label="Ellipse options"></button>
    <button class="t" aria-label="Text"><svg class="ic flat"><use href="#txt"/></svg></button>
    <button class="t" aria-label="Slot"><svg class="ic"><use href="#slot"/></svg></button><button class="dd" aria-label="Slot options"></button>
    <button class="t" aria-label="Polygon"><svg class="ic"><use href="#hex"/></svg></button><i></i>
    <button class="t" aria-label="Fillet"><svg class="ic"><use href="#fil"/></svg></button><button class="dd" aria-label="Fillet options"></button>
    <button class="t" aria-label="Point"><svg class="ic"><use href="#pt"/></svg></button>
  </div>
  <i class="rule"></i>
  <div class="cmd trimc on"><button><svg class="ic"><use href="#trim"/></svg><span><u>T</u>rim<br>Entities</span></button><button class="dd" aria-label="Trim options"></button></div>
  <div class="cmd mid"><button><svg class="ic"><use href="#conv"/></svg><span>Convert<br>Entities</span></button><button class="dd" aria-label="Convert options"></button></div>
  <div class="cmd mid low"><button><svg class="ic"><use href="#off"/></svg><span>Offset<br>Entities</span></button></div>
  <div class="cmd trimc low"><button disabled><svg class="ic"><use href="#offs"/></svg><span>Offset<br>On<br>Surface</span></button></div>
  <div class="rows">
    <div><button><svg class="ic"><use href="#mir"/></svg>Mirror Entities</button></div>
    <div><button><svg class="ic"><use href="#pat"/></svg>Linear Sketch Pattern</button><button class="dd" aria-label="Pattern options"></button></div>
    <div><button><svg class="ic"><use href="#mov"/></svg>Move Entities</button><button class="dd" aria-label="Move options"></button></div>
  </div>
  <i class="rule"></i>
  <div class="cmd wide"><button><svg class="ic"><use href="#rel"/></svg><span>Display/Delete<br>Relations</span></button><button class="dd" aria-label="Relations options"></button></div>
  <div class="cmd slim low"><button><svg class="ic"><use href="#rep"/></svg><span>Repair<br>Sketch</span></button></div>
  <i class="rule"></i>
  <div class="cmd slim"><button><svg class="ic"><use href="#snap"/></svg><span>Quick<br>Snaps</span></button><button class="dd" aria-label="Snap options"></button></div>
  <i class="rule"></i>
  <div class="cmd rapid low"><button><svg class="ic"><use href="#rapid"/></svg><span>Rapid<br>Sketch</span></button></div>
  <div class="cmd end low"><button><svg class="ic"><use href="#inst"/></svg><span>Instant2D</span></button></div>
  <div class="cmd end low"><button><svg class="ic"><use href="#shade"/></svg><span>Shaded<br>Sketch<br>Contours</span></button></div>
</div>

<main class="work">
  <nav class="tabs">
    <button>Features</button><button class="cur">Sketch</button><button>Sheet Metal</button><button>Weldments</button><button>Markup</button><button>Evaluate</button><button>MBD Dimensions</button><button>SOLIDWORKS Add-Ins</button>
  </nav>

  <aside class="left">
    <div class="cut">
      <div class="vtool one">
        <i class="dots"></i>
        <svg class="half" viewBox="8 0 12 20"><use href="#sm1" width="20" height="20"/></svg>
        <svg class="half" viewBox="8 0 12 20"><use href="#sm2" width="20" height="20"/></svg>
        <svg class="half" viewBox="8 0 12 20"><use href="#sm3" width="20" height="20"/></svg>
        <i class="hr"></i>
        <svg class="half" viewBox="8 0 12 20"><use href="#sm6" width="20" height="20"/></svg>
        <svg class="half" viewBox="8 0 12 20"><use href="#sm4" width="20" height="20"/></svg>
        <svg class="half" viewBox="8 0 12 20"><use href="#sm5" width="20" height="20"/></svg>
        <svg class="half" viewBox="8 0 12 20"><use href="#sm6" width="20" height="20"/></svg>
        <svg class="half" viewBox="8 0 12 20"><use href="#sm3" width="20" height="20"/></svg>
        <svg class="half" viewBox="8 0 12 20"><use href="#sm6" width="20" height="20"/></svg>
        <div class="pair"><svg class="half" viewBox="8 0 12 20"><use href="#sm3" width="20" height="20"/></svg><button class="dd dim" aria-label="More features"></button></div>
        <svg class="half" viewBox="8 0 12 20"><use href="#sm6" width="20" height="20"/></svg>
        <i class="hr"></i>
        <svg class="half" viewBox="8 0 12 20"><use href="#sm7" width="20" height="20"/></svg>
        <svg class="half" viewBox="8 0 12 20"><use href="#sm8" width="20" height="20"/></svg>
        <svg class="half" viewBox="8 0 12 20"><use href="#sm9" width="20" height="20"/></svg>
        <i class="hr"></i>
        <svg class="half" viewBox="8 0 12 20"><use href="#sm8" width="20" height="20"/></svg>
        <svg class="half" viewBox="8 0 12 20"><use href="#sm8" width="20" height="20"/></svg>
        <svg class="half" viewBox="8 0 12 20"><use href="#sm6" width="20" height="20"/></svg>
        <svg class="half" viewBox="8 0 12 20"><use href="#sm5" width="20" height="20"/></svg>
        <i class="hr"></i>
        <svg class="half" viewBox="8 0 12 20"><use href="#sm8" width="20" height="20"/></svg>
        <svg class="half" viewBox="8 0 12 20"><use href="#sm5" width="20" height="20"/></svg>
        <i class="hr"></i>
      </div>
      <div class="vtool two">
        <i class="dots"></i>
        <span class="three">3D</span>
        <svg class="half" viewBox="8 0 12 20"><use href="#sm5" width="20" height="20"/></svg>
        <svg class="half" viewBox="8 0 12 20"><use href="#sm8" width="20" height="20"/></svg>
        <svg class="half" viewBox="8 0 12 20"><use href="#sm4" width="20" height="20"/></svg>
        <svg class="half" viewBox="8 0 12 20"><use href="#sm7" width="20" height="20"/></svg>
        <svg class="half" viewBox="8 0 12 20"><use href="#sm8" width="20" height="20"/></svg>
        <svg class="half" viewBox="8 0 12 20"><use href="#sm6" width="20" height="20"/></svg>
        <svg class="half" viewBox="8 0 12 20"><use href="#sm3" width="20" height="20"/></svg>
        <svg class="half" viewBox="8 0 12 20"><use href="#sm7" width="20" height="20"/></svg>
      </div>
    </div>
    <div class="vtool planes">
      <i class="dots"></i>
      <button class="t" aria-label="Sketch"><svg class="ic flat"><use href="#sk"/></svg></button>
      <button class="t" aria-label="Plane 1"><svg class="ic flat"><use href="#cubeoff"/></svg></button>
      <button class="t" aria-label="Plane 2"><svg class="ic flat"><use href="#cubeoff"/></svg></button>
      <button class="t" aria-label="Plane 3"><svg class="ic flat"><use href="#cubeoff"/></svg></button>
      <button class="t" aria-label="Plane 4"><svg class="ic flat"><use href="#cubeoff"/></svg></button>
      <button class="t" aria-label="Plane 5"><svg class="ic flat"><use href="#cubeoff"/></svg></button>
      <button class="t" aria-label="Plane 6"><svg class="ic flat"><use href="#cubeoff"/></svg></button>
      <i class="hr"></i>
      <button class="t" aria-label="Select sketch"><svg class="ic"><use href="#sel"/></svg></button>
      <button class="t" aria-label="Repair"><svg class="ic"><use href="#rep"/></svg></button>
      <button class="t" aria-label="Modify"><svg class="ic"><use href="#scr"/></svg></button>
      <i class="hr"></i>
      <button class="t" aria-label="Make block"><svg class="ic flat"><use href="#lay1"/></svg></button>
      <button class="t" aria-label="Edit block"><svg class="ic flat"><use href="#lay2"/></svg></button>
    </div>
    <section class="panel">
      <div class="split"><i class="knob"></i></div>
      <div class="ptabs">
        <button aria-label="Feature tree"><svg class="ic"><use href="#part"/></svg></button><button class="cur" aria-label="Properties"><svg class="ic"><use href="#pmlist"/></svg></button><button aria-label="Configurations"><svg class="ic flat"><use href="#tree"/></svg></button><button aria-label="Dimensions"><svg class="ic flat"><use href="#target"/></svg></button><button aria-label="Display"><svg class="ic flat"><use href="#ball"/></svg></button>
      </div>
      <div class="phead"><svg class="ic"><use href="#trim"/></svg><h2>Trim</h2><button class="help" aria-label="Help">?</button></div>
      <button class="ok" aria-label="OK"><svg viewBox="0 0 16 14"><path d="M1 8l3-2 2 3 7-8 3 1-9 12H6z" fill="#35a71c" stroke="#b9dcb0" stroke-width=".6"/></svg></button>
      <div class="grp"><h3>Message</h3><svg class="chev" viewBox="0 0 12 10"><path d="M1 6l5-5 5 5M1 9l5-5 5 5"/></svg></div>
      <p class="msg">Select an entity to trim to the nearest intersecting entity or to drag to an entity</p>
      <div class="grp opt"><h3><u>O</u>ptions</h3><svg class="chev" viewBox="0 0 12 10"><path d="M1 6l5-5 5 5M1 9l5-5 5 5"/></svg></div>
      <div class="opts">
        <button><svg><use href="#trimbig"/></svg><span><u>P</u>ower trim</span></button>
        <button><svg><use href="#corner"/></svg><span><u>C</u>orner</span></button>
        <button><svg><use href="#inside"/></svg><span>Trim away <u>i</u>nside</span></button>
        <button><svg><use href="#outside"/></svg><span>Trim away <u>o</u>utside</span></button>
        <button class="on"><svg><use href="#closest"/></svg><span><u>T</u>rim to closest</span></button>
      </div>
      <label class="chk"><input type="checkbox" checked><span>Keep trimmed entities as<br>construction geometry</span></label>
      <label class="chk"><input type="checkbox"><span>Ignore trimming of construction<br>geometry</span></label>
      <button class="tab" aria-label="Collapse panel"><i class="knob"></i></button>
    </section>
  </aside>

  <section class="view">
    <svg class="model" viewBox="297 148 1521 856" preserveAspectRatio="xMidYMid meet" aria-label="Sketch3">
      <circle cx="1064.500" cy="505.500" r="471" fill="#8c8fa2" stroke="#050505"/>
      <polygon id="outer" fill="#8c8fa2" stroke="#050505"/>
      <polygon id="middle" class="edge-line"/>
      <polyline id="inner" class="thick"/>
      <polyline id="lower" class="thin chain"/>
      <path class="thin chain" d="M906 679.500h317"/>
      <path class="thick" d="M906 679.500v187h317.500v-187"/>
      <path class="thin" d="M829 507.500L1299 505M906 649v25M1223.500 649v25M906 662.500h317M848 679.500h52M848 866.500h52M861.500 654v238"/>
      <path d="M829 507.500l13-3v5zM1299 505l-13-2v5zM906 662.500l13-2.500v5zM1223 662.500l-13-2.500v5zM861.500 679.500l-3-13h6zM861.500 866.500l-3 13h6z"/>
      <circle cx="906" cy="679.500" r="3"/><circle cx="1223.500" cy="679.500" r="3"/><circle cx="906" cy="866.500" r="3"/><circle cx="1223.500" cy="866.500" r="3"/>
      <path d="M1064.500 505.500V483M1064.500 505.500h9" stroke="#f00" fill="none"/><path d="M1064.500 473l-3 10h6zM1081 505.500l-9-3v6z" fill="#f00"/><path class="thin" d="M1064.500 502v7M1061 505.500h7"/>
      <path fill="#00cd34" d="M1058 514h12v12h-12zM1058 688h12v12h-12zM913 767h12v12h-12zM1231 767h12v12h-12zM1058 847h12v12h-12zM1218 660h12v12h-12z"/>
      <path class="thin" d="M1059 525l10-10M1060 516l9 9M1059 693.500h10M1059 852.500h10M918.500 768v10M1236.500 768v10"/><circle cx="1064" cy="520" r="1.500" class="thin"/>
      <circle cx="1224" cy="666" r="5.500" fill="none" stroke="#000" stroke-width="1.500" stroke-dasharray="5 3"/><circle cx="1224" cy="666" r="1.500"/>
      <text x="860" y="503" class="dimtxt lite">Ø</text><text x="877" y="503" class="dimtxt">12.60</text>
      <text x="1034" y="659" class="dimtxt c">8.50</text>
      <text transform="translate(858 762) rotate(-90)" class="dimtxt c">5.00</text>
      <g fill="none" stroke="#ed1c24" stroke-width="5"><ellipse cx="1106.500" cy="677.500" rx="35.500" ry="24.500"/><circle cx="1018.500" cy="734.500" r="23"/></g>
    </svg>
    <div class="tree"><i class="tri"></i><svg viewBox="0 0 20 20"><use href="#part" x="5" width="15" height="17"/><rect x="1" y="5" width="7" height="14" rx="3" fill="#222" stroke="#aaa"/><circle cx="4.500" cy="9" r="2" fill="#d22"/><circle cx="4.500" cy="15" r="2" fill="#3a3"/></svg><span>quena&nbsp; (Default&lt;&lt;Default...</span></div>
    <div class="hud">
      <button class="t" aria-label="Zoom to fit"><svg class="ic"><use href="#fit"/></svg></button><button class="t" aria-label="Zoom to area"><svg class="ic"><use href="#area"/></svg></button><button class="t" aria-label="Previous view"><svg class="ic"><use href="#prev"/></svg></button><button class="t" aria-label="Section"><svg class="ic"><use href="#section"/></svg></button><button class="t" aria-label="Annotations"><svg class="ic"><use href="#ann"/></svg></button><button class="t" aria-label="Orientation"><svg class="ic"><use href="#orient"/></svg></button><button class="dd" aria-label="Orientation options"></button><button class="t" aria-label="Style"><svg class="ic"><use href="#style"/></svg></button><button class="dd" aria-label="Style options"></button><button class="t" aria-label="Hide"><svg class="ic"><use href="#eye"/></svg></button><button class="dd" aria-label="Hide options"></button><button class="t" aria-label="Appearance"><svg class="ic faint"><use href="#paint"/></svg></button><button class="t" aria-label="Scene"><svg class="ic"><use href="#scene"/></svg></button><button class="dd" aria-label="Scene options"></button><button class="t" aria-label="Settings"><svg class="ic"><use href="#screen"/></svg></button><button class="dd" aria-label="Setting options"></button>
    </div>
    <div class="panes">
      <button aria-label="Left pane"><svg viewBox="0 0 14 16"><path d="M.500.500h13v15H.500zM2.500 3.500h9v10h-9zM7.500 3.500v10M5 6L3 8l2 2"/></svg></button>
      <button aria-label="Right pane"><svg viewBox="0 0 14 16"><path d="M.500.500h13v15H.500zM2.500 3.500h9v10h-9zM6.500 3.500v10M9 6l2 2-2 2"/></svg></button>
    </div>
    <div class="corner">
      <svg viewBox="0 0 54 60" class="triad"><circle cx="10" cy="48" r="4" fill="#fff" stroke="#e22" stroke-dasharray="2 3"/><path d="M10 48V26" stroke="#6fc46f" stroke-width="3"/><path d="M10 17l-4 10h8z" fill="#177a17"/><path d="M10 48h22" stroke="#2222c8" stroke-width="4"/><path d="M10 48h22" stroke="#7d7df5"/><path d="M41 48l-10-4v8z" fill="#1b1bd8"/><text x="6" y="15" fill="#0c7a0c">Y</text><text x="39" y="52" fill="#1212f0">Z</text></svg>
      <div class="vname">*Left</div>
    </div>
  </section>
</main>
<script src="sketch.js"></script>
</body>
</html>
```
FILE: styles.css
```css
* { box-sizing: border-box; }
body {
  margin: 0;
  height: 100vh;
  display: flex;
  flex-direction: column;
  overflow: hidden;
  background: #494949;
  color: #f0f0f0;
  font: 11px/13px "Open Sans", "Noto Sans", sans-serif;
}
button {
  margin: 0;
  padding: 0;
  border: 0;
  background: none;
  color: inherit;
  font: inherit;
}
i { flex: none; }
.defs { position: absolute; width: 0; height: 0; }
.ic {
  width: 20px;
  height: 20px;
  display: block;
  flex: none;
  filter: drop-shadow(0 0 1px #ddd);
}
.flat { filter: none; }
.faint { opacity: .5; }

/* icon strokes */
.k { fill: #b9b9b955; stroke: #1c1c1c; }
.f { fill: #5fb0d5; stroke: #17394c; }
.b { fill: none; stroke: #2f86b5; stroke-width: 2px; }
.p { fill: #fff; stroke: #222; stroke-width: 1px; }
.g { fill: none; stroke: #9a9a9a; stroke-width: 3px; stroke-dasharray: 3px 1px; }
.w { fill: none; stroke: #161616; stroke-width: 2px; }
.b3 { fill: none; stroke: #2f86b5; stroke-width: 3px; }
.q { fill: #5cb1da; stroke: #1f5b79; stroke-width: 1px; }

.strip { height: 2px; flex: none; background: #1e1e1e; }
.strip i { display: block; width: 48px; height: 2px; margin-left: 58%; background: #3c3c3c; }

/* menu bar */
.menubar {
  height: 32px;
  flex: none;
  display: flex;
  align-items: center;
  border-bottom: 1px solid #858585;
}
.brand {
  width: 141px;
  height: 32px;
  flex: none;
  display: flex;
  align-items: center;
  gap: 5px;
  background: linear-gradient(160deg, #fff 40%, #c9c9c9);
  border-bottom: 1px solid #aaa;
}
.mark { width: 30px; height: 30px; flex: none; }
.name { font: italic 300 16px/20px Lato, sans-serif; color: #d9261c; margin-top: 8px; }
.name b { font-weight: 900; }
.menus {
  width: 359px;
  height: 32px;
  flex: none;
  display: flex;
  align-items: center;
  gap: 14px;
  padding: 0 8px 0 28px;
  border-bottom: 1px solid #000;
  border-right: 1px solid #333;
  font-size: 12px;
}
.pinbtn { margin-left: auto; margin-right: -4px; }
.quick { display: flex; align-items: center; padding-left: 15px; }
.t {
  width: 26px;
  height: 26px;
  flex: none;
  display: flex;
  align-items: center;
  justify-content: center;
}
.dd {
  width: 14px;
  height: 14px;
  flex: none;
  display: flex;
  align-items: center;
  justify-content: center;
}
.dd::after {
  content: "";
  border: 3px solid transparent;
  border-top-color: #f0f0f0;
  border-bottom: 0;
}
.dark::after { border-top-color: #222; }
.dim::after { border-top-color: #999; }
.doc { flex: 1; text-align: center; color: #c2c8c6; }
.search {
  width: 202px;
  height: 23px;
  flex: none;
  display: flex;
  align-items: center;
  padding: 0 2px 0 5px;
  background: #ebedf2;
  border: 1px solid #111;
}
.search input { flex: 1; min-width: 0; padding: 0 6px; border: 0; background: none; font: inherit; color: #555; }
.search input::placeholder { color: #5d6266; opacity: 1; }
.prompt { width: 15px; height: 15px; }
.glass { width: 18px; height: 18px; }
.user { margin-left: 3px; }
.q1 { font: 900 18px/20px Lato, sans-serif; color: #151515; filter: drop-shadow(0 0 1px #ddd); margin-right: 4px; }

/* view toolbar */
.bar {
  height: 32px;
  flex: none;
  display: flex;
  align-items: center;
  padding-bottom: 2px;
  border-bottom: 1px solid #858585;
}
.bar .t { width: 27px; }
.bar .dd { width: 15px; }
.bar .on { background: #2a2a2a; border: 1px solid #000; }
.sep { width: 2px; height: 22px; margin: 0 2px 0 3px; background: #2a2a2a; border-right: 1px solid #777; }
.wide-sep { margin: 0 4px; }
.edge { width: 1px; height: 31px; margin-left: 7px; background: #858585; }
.grip { width: 2px; height: 26px; margin: 0 7px 0 3px; background: repeating-linear-gradient(#ddd 0 2px, transparent 2px 4px); }
.wide-grip { margin-right: 10px; }
.url { width: 256px; height: 25px; flex: none; position: relative; margin-left: 2px; }
.url select {
  width: 100%;
  height: 25px;
  padding: 0 4px;
  appearance: none;
  border: 1px solid #aaa;
  border-radius: 0;
  background: #e1e1e1;
  color: #000;
  font: 12px/20px "Open Sans", sans-serif;
}
.url::after {
  content: "";
  position: absolute;
  right: 6px;
  top: 8px;
  width: 5px;
  height: 5px;
  border: solid #444;
  border-width: 0 1px 1px 0;
  transform: rotate(45deg);
}

/* command ribbon */
.ribbon {
  height: 82px;
  flex: none;
  display: flex;
  border-bottom: 1px solid #858585;
}
.rule { width: 1px; height: 78px; margin: 1px 1px 0 0; background: #858585; }
.cmd { display: flex; flex-direction: column; align-items: center; flex: none; height: 79px; padding-top: 1px; }
.cmd button:first-child { width: 100%; height: 58px; display: flex; flex-direction: column; align-items: center; padding-top: 3px; gap: 2px; white-space: nowrap; }
.cmd .dd { width: 100%; height: 20px; }
.low button:first-child { height: 78px; padding-top: 10px; }
.cmd.on button:first-child { background: #2a2a2a; border: 1px solid #000; padding-top: 2px; }
.cmd.on .dd { border: 1px solid #2a2a2a; border-top: 0; }
.cmd button:disabled { color: #8a8a8a; }
.cmd button:disabled .ic { filter: none; }
.exit { width: 44px; margin-left: -8px; }
.rapid { width: 45px; }
.smart { width: 66px; }
.trimc { width: 47px; }
.mid { width: 50px; }
.slim { width: 43px; }
.wide { width: 84px; }
.end { width: 59px; }
.grid { display: grid; grid-template-columns: 26px 14px 26px 14px 26px 14px 26px; grid-template-rows: repeat(3, 26px); align-items: center; width: 148px; flex: none; }
.rows { width: 175px; flex: none; }
.rows div { height: 26px; display: flex; align-items: center; justify-content: space-between; padding-right: 3px; }
.rows button:first-child { display: flex; align-items: center; gap: 6px; }

/* workspace */
.work { flex: 1; min-height: 0; display: flex; position: relative; }
.tabs { position: absolute; left: -15px; top: 0; z-index: 2; display: flex; height: 22px; font-size: 12px; }
.tabs button { padding: 0 6px; background: #333; border-right: 1px solid #8a8a8a; border-bottom: 1px solid #8a8a8a; white-space: nowrap; }
.tabs .cur { padding: 0 7px; background: #494949; font-weight: 700; border-bottom-color: #494949; }
.left { width: 297px; flex: none; display: flex; padding-top: 22px; border-right: 1px solid #858585; position: relative; z-index: 1; }
.cut { width: 35px; flex: none; display: flex; flex-direction: column; }
.vtool { display: flex; flex-direction: column; flex: none; }
.vtool.one { height: 581px; border-right: 1px solid #858585; border-bottom: 1px solid #858585; }
.vtool.two { width: 20px; flex: 1; border-right: 1px solid #858585; }
.dots { height: 2px; margin: 2px 3px 10px 0; background: repeating-linear-gradient(90deg, #ddd 0 2px, transparent 2px 4px); }
.half { width: 12px; height: 20px; margin: 3px 0; flex: none; display: block; }
.pair { display: flex; align-items: center; gap: 4px; }
.hr { height: 2px; margin: 3px 3px 3px 0; background: #2a2a2a; border-bottom: 1px solid #777; }
.three { height: 20px; margin: 3px 0; width: 12px; overflow: hidden; direction: rtl; font-weight: 700; line-height: 16px; color: #222; border: solid #666; border-width: 2px 0; }
.planes { width: 32px; height: 349px; border-bottom: 1px solid #858585; align-items: center; }
.planes .dots, .planes .hr { width: 26px; margin-left: 0; margin-right: 0; }
.panel { flex: 1; min-width: 0; position: relative; }
.split { height: 20px; margin-right: 2px; border: solid #858585; border-width: 0 0 1px; display: flex; justify-content: center; align-items: center; background: linear-gradient(#8fb9bf 0 1px, transparent 1px 4px, #858585 4px 5px, transparent 5px); padding-top: 4px; }
.knob { width: 8px; height: 8px; border-radius: 4px; background: radial-gradient(#e8e8e8, #999); }
.ptabs { display: flex; margin-top: 4px; margin-right: 2px; padding-left: 2px; height: 26px; background: linear-gradient(#858585, #858585) bottom / 100% 1px no-repeat; }
.ptabs button { width: 40px; height: 26px; display: flex; align-items: center; justify-content: center; background: #333; border: 1px solid #858585; border-left: 0; }
.ptabs .cur { background: #494949; border-bottom-color: #494949; }
.ptabs .ic { width: 18px; height: 18px; }
.phead { display: flex; align-items: center; height: 20px; margin: 6px 14px 0 9px; gap: 5px; }
h2, h3 { margin: 0; font-size: 11px; line-height: 16px; font-weight: 700; }
h2 { font-size: 12px; }
.help { margin-left: auto; width: 13px; height: 13px; border-radius: 7px; background: #eee; color: #17658f; font-weight: 700; line-height: 13px; text-align: center; }
.ok { display: block; width: 16px; height: 14px; margin: 10px 0 0 7px; }
.ok svg { display: block; width: 16px; height: 14px; }
.grp { display: flex; justify-content: space-between; align-items: center; margin: 12px 7px 0 5px; padding: 7px 2px 5px 4px; border-top: 1px solid #a5a5a5; }
.opt { margin-top: 4px; padding-bottom: 4px; }
.chev { width: 12px; height: 10px; fill: none; stroke: #c8c8c8; }
.msg { margin: 0 7px 0 5px; height: 48px; padding: 0 16px 0 4px; background: #ffff80; color: #000; }
.opts { display: flex; flex-direction: column; gap: 8px; padding-left: 9px; align-items: flex-start; }
.opts button { display: flex; align-items: center; gap: 5px; }
.opts svg { width: 48px; height: 48px; border: 1px solid #222; box-shadow: inset 0 1px #777; display: block; }
.opts use { filter: drop-shadow(0 0 1px #ccc); }
.opts .on svg { background: #2a2a2a; border-color: #000; box-shadow: none; }
.chk { display: flex; gap: 4px; margin: 8px 0 0 9px; align-items: flex-start; }
.chk + .chk { margin-top: 11px; }
.chk input { appearance: none; margin: 0; width: 12px; height: 12px; background: #fff; position: relative; }
.chk input:checked::after { content: ""; position: absolute; left: 4px; top: 1px; width: 4px; height: 8px; border: solid #222; border-width: 0 1px 1px 0; transform: rotate(40deg); }
.tab { position: absolute; right: -9px; top: 45%; margin-top: 12px; width: 9px; height: 39px; background: #494949; border: 1px solid #858585; border-left: 0; display: flex; align-items: center; justify-content: center; }

/* graphics area */
.view { flex: 1; min-width: 0; position: relative; background: #3b4441; overflow: hidden; }
.model { display: block; width: 100%; height: 100%; }
.thin { fill: none; stroke: #0a0a0a; stroke-width: 1px; }
.edge-line { fill: none; stroke: #000; stroke-width: 1.4px; }
.thick { fill: none; stroke: #000; stroke-width: 2px; }
.chain { stroke-dasharray: 52px 4px 4px 4px; }
.dimtxt { font: 700 18px Lato, sans-serif; }
.lite { font-weight: 300; }
.c { text-anchor: middle; }
.tree { position: absolute; left: 5px; top: 27px; display: flex; align-items: center; gap: 5px; color: #0c0c0c; font-size: 12px; }
.tree svg { width: 20px; height: 20px; margin-left: 5px; }
.tri { border: 4px solid transparent; border-left-color: #222; border-right: 0; }
.hud { position: absolute; left: 41%; top: 2px; display: flex; align-items: center; }
.hud .ic { opacity: .85; }
.hud .ic.faint { opacity: .4; }
.hud .dd::after { border-top-color: #73768a; }
.panes { position: absolute; right: 3px; top: 7px; display: flex; gap: 12px; }
.panes svg { display: block; width: 14px; height: 16px; fill: none; stroke: #87908d; }
.corner { position: absolute; left: 12px; bottom: -2px; }
.triad { display: block; width: 54px; height: 60px; margin-left: 18px; font: 12px "Open Sans", sans-serif; }
.vname { margin-top: 28px; font: 14px/16px "Open Sans", sans-serif; color: #151515; }
```
FILE: sketch.js
```js
// Facets the sketch circles around the origin of the model.
const ORIGIN = { x: 1064.5, y: 505.5 };

function facets(radius, from, sweep, steps) {
  const points = [];
  for (let i = 0; i <= steps; i++) {
    const a = (from + (sweep * i) / steps) * Math.PI / 180;
    points.push((ORIGIN.x + radius * Math.cos(a)).toFixed(1) + "," + (ORIGIN.y + radius * Math.sin(a)).toFixed(1));
  }
  return points.join(" ");
}

document.getElementById("outer").setAttribute("points", facets(471, 0, 360, 39));
document.getElementById("middle").setAttribute("points", facets(284, 0, 360, 31));
document.getElementById("inner").setAttribute("points", facets(235, 47.6, -275.2, 33));
document.getElementById("lower").setAttribute("points", facets(235, 132.4, -84.8, 10));
```
